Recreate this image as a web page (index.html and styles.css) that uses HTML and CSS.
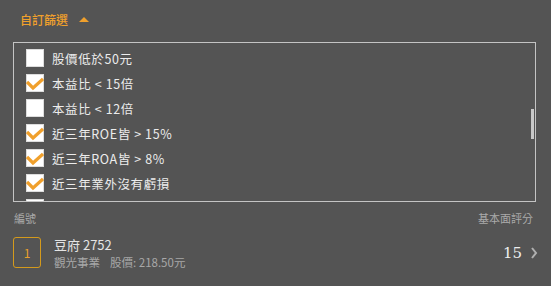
FILE: index.html
```html
<!DOCTYPE html>
<html lang="zh-Hant">
<head>
    <meta charset="UTF-8">
    <meta name="viewport" content="width=device-width, initial-scale=1.0">
    <title>自訂篩選</title>
    <link rel="stylesheet" href="styles.css">
</head>
<body>
    <div class="filter-header">
        <span class="filter-title">自訂篩選</span>
        <span class="caret-up"></span>
    </div>

    <div class="filter-box">
        <ul class="filter-list">
            <li class="filter-item"><span class="check"></span>股價低於50元</li>
            <li class="filter-item checked"><span class="check"><svg viewBox="0 0 18 18"><polyline points="1,8 7,14 17,5"/></svg></span>本益比 &lt; 15倍</li>
            <li class="filter-item"><span class="check"></span>本益比 &lt; 12倍</li>
            <li class="filter-item checked"><span class="check"><svg viewBox="0 0 18 18"><polyline points="1,8 7,14 17,5"/></svg></span>近三年ROE皆 &gt; 15%</li>
            <li class="filter-item checked"><span class="check"><svg viewBox="0 0 18 18"><polyline points="1,8 7,14 17,5"/></svg></span>近三年ROA皆 &gt; 8%</li>
            <li class="filter-item checked"><span class="check"><svg viewBox="0 0 18 18"><polyline points="1,8 7,14 17,5"/></svg></span>近三年業外沒有虧損</li>
            <li class="filter-item"><span class="check"></span></li>
        </ul>
        <div class="scroll-thumb"></div>
    </div>

    <div class="list-head">
        <span>編號</span>
        <span>基本面評分</span>
    </div>

    <div class="stock-row">
        <div class="rank">1</div>
        <div class="stock-info">
            <div class="stock-name">豆府 2752</div>
            <div class="stock-meta"><span>觀光事業</span><span>股價: 218.50元</span></div>
        </div>
        <div class="score">15</div>
        <svg class="chevron" viewBox="0 0 8 12"><polyline points="2,1 6,6 2,11"/></svg>
    </div>
</body>
</html>
```

FILE: styles.css
```css
* {
    margin: 0;
    padding: 0;
    box-sizing: border-box;
}

body {
    font-family: "Noto Sans CJK TC", "Noto Sans", sans-serif;
    background: #545454;
    color: #eee;
    width: 551px;
    height: 286px;
    overflow: hidden;
}

.filter-header {
    display: flex;
    align-items: center;
    height: 42px;
    padding: 0 0 4px 20px;
}

.filter-title {
    color: #f0a02c;
    font-size: 12px;
    font-weight: 500;
}

.caret-up {
    width: 0;
    height: 0;
    margin-left: 11px;
    border-left: 5px solid transparent;
    border-right: 5px solid transparent;
    border-bottom: 5px solid #f0a02c;
}

.filter-box {
    position: relative;
    margin: 0 15px 0 13px;
    height: 160px;
    border: 1px solid #c4c4c4;
    overflow: hidden;
}

.filter-list {
    list-style: none;
    padding: 3px 0 0 12px;
}

.filter-item {
    display: flex;
    align-items: center;
    gap: 8px;
    height: 25px;
    font-size: 12.5px;
    letter-spacing: 0.6px;
    color: #ececec;
}

.check {
    width: 18px;
    height: 18px;
    margin-top: -2px;
    background: #fff;
    border: 1px solid #ddd;
    flex-shrink: 0;
}

.check svg {
    display: block;
    width: 18px;
    height: 18px;
    margin: -1px 0 0 -1px;
    fill: none;
    stroke: #f0a02c;
    stroke-width: 3.2;
}

.scroll-thumb {
    position: absolute;
    right: 1px;
    top: 66px;
    width: 3px;
    height: 30px;
    background: #c8c8c8;
}

.list-head {
    display: flex;
    justify-content: space-between;
    padding: 8px 18px 0 14px;
    height: 30px;
    font-size: 11px;
    color: #aaa;
}

.stock-row {
    display: flex;
    align-items: center;
    padding: 2px 13px 0 13px;
}

.rank {
    width: 28px;
    height: 31px;
    border: 1px solid #d49a1c;
    border-radius: 3px;
    color: #e8a02c;
    font-size: 12px;
    display: flex;
    align-items: center;
    justify-content: center;
}

.stock-info {
    flex: 1;
    margin-left: 13px;
    margin-top: 2px;
}

.stock-name {
    font-size: 13px;
    color: #e4e4e4;
    line-height: 18px;
}

.stock-meta {
    display: flex;
    gap: 10px;
    font-size: 11.5px;
    color: #a8a8a8;
    line-height: 17px;
}

.score {
    font-family: "DejaVu Serif", serif;
    font-size: 15px;
    color: #eee;
}

.chevron {
    width: 8px;
    height: 12px;
    margin-left: 8px;
    fill: none;
    stroke: #b0b0b0;
    stroke-width: 2;
}
```
